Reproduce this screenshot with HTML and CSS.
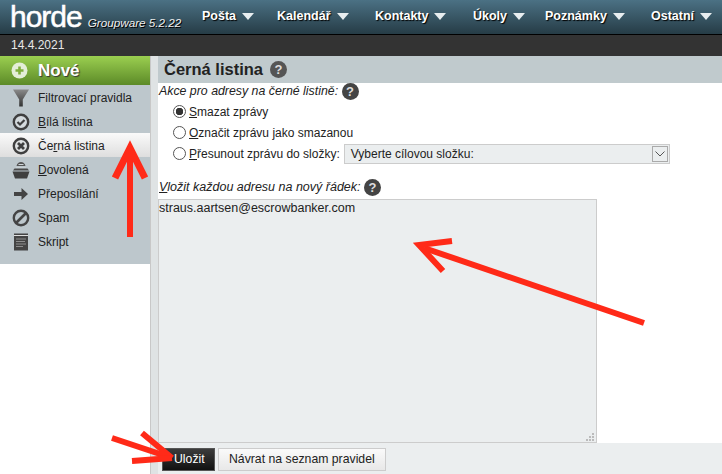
FILE: index.html
```html
<!DOCTYPE html>
<html lang="cs">
<head>
<meta charset="UTF-8">
<title>Černá listina</title>
<link rel="stylesheet" href="styles.css">
</head>
<body>
<header class="topbar">
    <div class="logo"><span class="logo-word">horde</span><span class="logo-ver">Groupware 5.2.22</span></div>
    <nav class="menu">
        <span class="menu-item m1">Pošta<i class="tri"></i></span>
        <span class="menu-item m2">Kalendář<i class="tri"></i></span>
        <span class="menu-item m3">Kontakty<i class="tri"></i></span>
        <span class="menu-item m4">Úkoly<i class="tri"></i></span>
        <span class="menu-item m5">Poznámky<i class="tri"></i></span>
        <span class="menu-item m6">Ostatní<i class="tri"></i></span>
    </nav>
</header>
<div class="datebar">14.4.2021</div>
<div class="main">
    <aside class="sidebar">
        <div class="new-btn">
            <svg class="new-ico" width="17" height="17" viewBox="0 0 17 17"><circle cx="8.500" cy="8.500" r="8" fill="#e4eed8"/><path d="M8.500 4.500v8M4.500 8.500h8" stroke="#7fae3c" stroke-width="2.600"/></svg>
            <span>Nové</span>
        </div>
        <ul class="side-list">
            <li class="side-item">
                <svg width="18" height="18" viewBox="0 0 18 18"><defs><linearGradient id="fun" x1="0" y1="0" x2="0" y2="1"><stop offset="0" stop-color="#8a8a8a"/><stop offset="1" stop-color="#333"/></linearGradient></defs><path d="M1 0.500h16L10.800 10.500V17.500H7.200V10.500z" fill="url(#fun)"/></svg>
                <span>Filtrovací pravidla</span>
            </li>
            <li class="side-item">
                <svg width="18" height="18" viewBox="0 0 18 18"><circle cx="9" cy="9" r="7.200" fill="#d4dadd" stroke="#3f3f3f" stroke-width="2.400"/><path d="M5.500 9l2.500 2.500 4.500-4.500" fill="none" stroke="#3f3f3f" stroke-width="2.200"/></svg>
                <span><u>B</u>ílá listina</span>
            </li>
            <li class="side-item active">
                <svg width="18" height="18" viewBox="0 0 18 18"><circle cx="9" cy="9" r="7.200" fill="#dfe2e3" stroke="#3f3f3f" stroke-width="2.400"/><path d="M6 6l6 6M12 6l-6 6" stroke="#3f3f3f" stroke-width="2.800"/></svg>
                <span>Če<u>r</u>ná listina</span>
            </li>
            <li class="side-item">
                <svg width="18" height="18" viewBox="0 0 18 18"><path d="M4.500 5C5 2.500 7 1 9 1s4 1.500 4.500 4z" fill="#555"/><path d="M6.500 3.500h5M4 6.800h10" stroke="#cdd4d8"/><path d="M2.500 7.500h13l1.500 2H1z" fill="#4a4a4a"/><path d="M0.500 10.500h17l-2.500 7H3z" fill="#3f3f3f"/></svg>
                <span><u>D</u>ovolená</span>
            </li>
            <li class="side-item">
                <svg width="18" height="18" viewBox="0 0 18 18"><path d="M2 7h7.500V3l6.500 6-6.500 6v-4H2z" fill="#444"/></svg>
                <span>Přeposílání</span>
            </li>
            <li class="side-item">
                <svg width="18" height="18" viewBox="0 0 18 18"><circle cx="9" cy="9" r="7.200" fill="none" stroke="#444" stroke-width="2.400"/><path d="M4 14L14 4" stroke="#444" stroke-width="2.600"/></svg>
                <span>Spam</span>
            </li>
            <li class="side-item">
                <svg width="18" height="18" viewBox="0 0 18 18"><rect x="2" y="0.500" width="14" height="17" fill="#444"/><path d="M2 2.500h14" stroke="#ddd"/><path d="M4 6h10M4 8.500h9M4 11h10M4 13.500h7" stroke="#8d8d8d"/></svg>
                <span>Skript</span>
            </li>
        </ul>
    </aside>
    <div class="divider"></div>
    <section class="content">
        <h1 class="page-title">Černá listina <i class="help help-light">?</i></h1>
        <div class="form-body">
            <div class="label">Akce pro adresy na černé listině: <i class="help">?</i></div>
            <div class="options">
                <div class="opt"><i class="radio on"></i><span><u>S</u>mazat zprávy</span></div>
                <div class="opt"><i class="radio"></i><span><u>O</u>značit zprávu jako smazanou</span></div>
                <div class="opt"><i class="radio"></i><span><u>P</u>řesunout zprávu do složky:</span>
                    <div class="select">Vyberte cílovou složku:
                        <i class="select-btn"><svg width="10" height="6" viewBox="0 0 10 6"><path d="M0.500 0.500L5 5l4.500-4.500" fill="none" stroke="#555"/></svg></i>
                    </div>
                </div>
            </div>
            <div class="label label-addr"><u>V</u>ložit každou adresu na nový řádek: <i class="help">?</i></div>
            <div class="addr-box">straus.aartsen@escrowbanker.com
                <svg class="grip" width="9" height="9" viewBox="0 0 9 9" fill="#bbb"><rect x="6" y="0" width="2" height="2"/><rect x="3" y="3" width="2" height="2"/><rect x="6" y="3" width="2" height="2"/><rect x="0" y="6" width="2" height="2"/><rect x="3" y="6" width="2" height="2"/><rect x="6" y="6" width="2" height="2"/></svg>
            </div>
        </div>
        <div class="btn-row">
            <span class="btn btn-dark">Uložit</span>
            <span class="btn">Návrat na seznam pravidel</span>
        </div>
    </section>
</div>
<svg class="arrows" width="722" height="474" viewBox="0 0 722 474">
    <g fill="none" stroke="#ff2a18" stroke-width="6" stroke-miterlimit="10">
        <path d="M130 237V150"/>
        <path d="M115 178L130 148l15 30" stroke-width="7"/>
        <path d="M644 323L424 248"/>
        <path d="M452 241L419 245l24 26"/>
        <path d="M112 438L172 458"/>
        <path d="M142 433L172 458"/>
        <path d="M132 461L172 458"/>
    </g>
</svg>
</body>
</html>
```

FILE: styles.css
```css
* {
    box-sizing: border-box;
}
html, body {
    height: 100%;
}
body {
    margin: 0;
    overflow: hidden;
    font-family: "Liberation Sans", Arial, sans-serif;
    font-size: 12px;
    color: #222;
    background-color: white;
    display: flex;
    flex-direction: column;
}
.topbar {
    height: 35px;
    flex: none;
    display: flex;
    border-bottom: 1px solid #000;
    background: linear-gradient(#4b7184, #263c46);
}
.logo {
    width: 202px;
    flex: none;
    display: flex;
    align-items: baseline;
    padding-left: 10px;
    color: white;
}
.logo-word {
    font-size: 30px;
    line-height: 33px;
    letter-spacing: -1px;
    -webkit-text-stroke: 0.5px white;
}
.logo-ver {
    margin-left: 6px;
    font-size: 11.700px;
    font-style: italic;
    color: #eee;
    text-shadow: 1px 1px 0 #000;
}
.menu {
    display: flex;
    flex: 1;
    font-weight: bold;
    font-size: 12.500px;
    color: white;
}
.menu-item {
    display: flex;
    align-items: center;
    height: 34px;
    padding-bottom: 2px;
    text-shadow: 1px 1px 1px #000;
}
.m1 { width: 75px; }
.m2 { width: 98px; }
.m3 { width: 98px; }
.m4 { width: 72px; }
.m5 { width: 106px; }
.tri {
    width: 0;
    height: 0;
    margin-left: 6px;
    margin-top: 1px;
    border-left: 6px solid transparent;
    border-right: 6px solid transparent;
    border-top: 7px solid #e8eef0;
}
.datebar {
    height: 21px;
    flex: none;
    padding-left: 11px;
    line-height: 20px;
    color: #e8e8e8;
    background-color: #333;
}
.main {
    flex: 1;
    display: flex;
    min-height: 0;
}
.sidebar {
    width: 150px;
    flex: none;
}
.new-btn {
    height: 29px;
    display: flex;
    align-items: center;
    padding-left: 11px;
    gap: 10px;
    font-size: 17px;
    font-weight: bold;
    color: white;
    text-shadow: 1px 1px 1px #333;
    background: linear-gradient(#9bcf50, #5c8a28);
}
.side-list {
    list-style: none;
    margin: 0;
    padding: 0 0 11px;
    background-color: #bdc7cc;
}
.side-item {
    height: 24px;
    display: flex;
    align-items: center;
    padding: 1px 0 0 12px;
    gap: 8px;
    color: #222;
}
.active {
    background: linear-gradient(#fafafa, #dedede);
}
.divider {
    width: 8px;
    flex: none;
    background-color: #dfe3e4;
    border-left: 1px solid #c8c8c8;
}
.content {
    flex: 1;
    min-width: 0;
    display: flex;
    flex-direction: column;
}
.page-title {
    margin: 0;
    height: 27px;
    flex: none;
    padding-left: 6px;
    display: flex;
    align-items: center;
    gap: 7px;
    font-size: 16.500px;
    font-weight: bold;
    color: #222;
    background-color: #c0cacd;
}
.help {
    display: inline-block;
    width: 17px;
    height: 17px;
    border-radius: 50%;
    background-color: #444;
    color: #ddd;
    font-size: 13px;
    font-weight: bold;
    font-style: normal;
    line-height: 17px;
    text-align: center;
    vertical-align: middle;
}
.help-light {
    background-color: #555;
}
.form-body {
    flex: 1;
    min-height: 0;
}
.label {
    height: 18px;
    padding-left: 1px;
    line-height: 17px;
    font-size: 12.350px;
    font-style: italic;
}
.options {
    padding-left: 15px;
}
.opt {
    height: 21px;
    display: flex;
    align-items: center;
    gap: 3px;
}
.radio {
    width: 13px;
    height: 13px;
    flex: none;
    border-radius: 50%;
    border: 1px solid #555;
    background-color: white;
}
.radio.on {
    background: radial-gradient(circle, #333 3.500px, white 4px);
}
.select {
    width: 326px;
    height: 20px;
    margin-left: 1px;
    padding-left: 6px;
    display: flex;
    align-items: center;
    justify-content: space-between;
    line-height: 18px;
    background-color: #ebeeef;
    border: 1px solid #ccc;
}
.select-btn {
    width: 16px;
    height: 16px;
    margin-right: 1px;
    display: flex;
    align-items: center;
    justify-content: center;
    border: 1px solid #aaa;
}
.label-addr {
    margin-top: 15px;
    margin-bottom: 2px;
    font-size: 12.500px;
}
.addr-box {
    position: relative;
    width: 439px;
    height: 244px;
    padding: 1px 0;
    font-size: 12.500px;
    background-color: #ebeeef;
    border: 1px solid #ccc;
}
.grip {
    position: absolute;
    right: 1px;
    bottom: 0;
}
.btn-row {
    height: 31px;
    flex: none;
    padding: 5px 4px 0;
    display: flex;
    gap: 3px;
    background-color: #ebeeef;
}
.btn {
    height: 23px;
    padding: 0 10px;
    line-height: 21px;
    font-size: 12.250px;
    border: 1px solid #ccc;
    background: linear-gradient(#fafafa, #e8e8e8);
}
.btn-dark {
    width: 53px;
    padding: 0 11px;
    color: white;
    border-color: #555;
    background: linear-gradient(#3c3c3c, #111);
}
.arrows {
    position: absolute;
    top: 0;
    left: 0;
    pointer-events: none;
}
```
